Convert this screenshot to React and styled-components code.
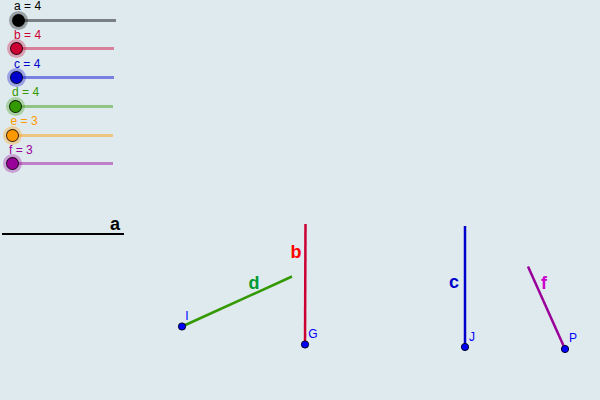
import styled, { createGlobalStyle } from "styled-components";

const GlobalStyle = createGlobalStyle`
  html, body {
    margin: 0;
    padding: 0;
    background: #dfeaee;
  }
  body {
    font-family: "Liberation Sans", Arial, sans-serif;
  }
`;

const Canvas = styled.div`
  position: relative;
  width: 600px;
  height: 400px;
  overflow: hidden;
  background: #dfeaee;
`;

const SliderPanel = styled.div`
  display: flex;
  flex-direction: column;
  width: 130px;
`;

const Slider = styled.div`
  display: flex;
  flex-direction: column;
  height: 28.8px;
`;

const SliderLabel = styled.div`
  height: 12px;
  line-height: 12px;
  font-size: 12px;
  color: ${(p) => p.$color};
  padding-left: ${(p) => p.$x}px;
  white-space: nowrap;
`;

const Track = styled.div`
  display: flex;
  align-items: center;
  height: 16px;
  padding-left: ${(p) => p.$x}px;
`;

const Knob = styled.div`
  position: relative;
  z-index: 1;
  flex: none;
  width: 13px;
  height: 13px;
  box-sizing: border-box;
  border-radius: 50%;
  border: 1px solid rgba(0, 0, 0, 0.8);
  background: ${(p) => p.$color};
  box-shadow: 0 0 0 3px ${(p) => p.$color}50;
`;

const Rail = styled.div`
  flex: none;
  height: 3px;
  margin-left: -6.5px;
  background: ${(p) => p.$color};
  opacity: 0.45;
`;

const Construction = styled.svg`
  position: absolute;
  inset: 0;
  pointer-events: none;
  font-family: "Liberation Sans", Arial, sans-serif;
`;

const sliders = [
  { name: "a", value: 4, color: "#000000", knob: 18, end: 116, labelX: 14 },
  { name: "b", value: 4, color: "#cc0033", knob: 16.5, end: 114, labelX: 14 },
  { name: "c", value: 4, color: "#0000cc", knob: 16.5, end: 114, labelX: 14 },
  { name: "d", value: 4, color: "#339900", knob: 15.7, end: 113, labelX: 12 },
  { name: "e", value: 3, color: "#ff9900", knob: 12.3, end: 113, labelX: 10.5 },
  { name: "f", value: 3, color: "#990099", knob: 12.3, end: 113, labelX: 9 },
];

const segments = [
  { x1: 182, y1: 326.5, x2: 292, y2: 276.5, color: "#339900", label: "d", lx: 254, ly: 283, lc: "#009933" },
  { x1: 305.5, y1: 224, x2: 305, y2: 344.5, color: "#cc0033", label: "b", lx: 296, ly: 252, lc: "#ff0000" },
  { x1: 465, y1: 226, x2: 465, y2: 347, color: "#0000cc", label: "c", lx: 454, ly: 282, lc: "#0000cc" },
  { x1: 528, y1: 266.5, x2: 565, y2: 349, color: "#990099", label: "f", lx: 544, ly: 283, lc: "#cc00cc" },
];

const points = [
  { name: "I", x: 182, y: 326.5, lx: 187, ly: 316 },
  { name: "G", x: 305, y: 344.5, lx: 313, ly: 334 },
  { name: "J", x: 465, y: 347, lx: 472, ly: 337 },
  { name: "P", x: 565, y: 349, lx: 573, ly: 338 },
];

export default function App() {
  return (
    <Canvas>
      <GlobalStyle />
      <SliderPanel>
        {sliders.map((s) => (
          <Slider key={s.name}>
            <SliderLabel $color={s.color} $x={s.labelX}>
              {s.name} = {s.value}
            </SliderLabel>
            <Track $x={s.knob - 6.5}>
              <Knob $color={s.color} />
              <Rail $color={s.color} style={{ width: s.end - s.knob }} />
            </Track>
          </Slider>
        ))}
      </SliderPanel>

      <Construction width="600" height="400" viewBox="0 0 600 400">
        <line x1="2" y1="234" x2="124" y2="234" stroke="#000" strokeWidth="2" />
        <text x="115" y="224" fontSize="18" fontWeight="bold" fill="#000" textAnchor="middle" dominantBaseline="central">
          a
        </text>

        {segments.map((s) => (
          <g key={s.label}>
            <line x1={s.x1} y1={s.y1} x2={s.x2} y2={s.y2} stroke={s.color} strokeWidth="2.5" />
            <text x={s.lx} y={s.ly} fontSize="18" fontWeight="bold" fill={s.lc} textAnchor="middle" dominantBaseline="central">
              {s.label}
            </text>
          </g>
        ))}

        {points.map((p) => (
          <g key={p.name}>
            <circle cx={p.x} cy={p.y} r="3.6" fill="#0000ff" stroke="#000022" strokeWidth="1" />
            <text x={p.lx} y={p.ly} fontSize="12" fill="#0000ff" textAnchor="middle" dominantBaseline="central">
              {p.name}
            </text>
          </g>
        ))}
      </Construction>
    </Canvas>
  );
}
